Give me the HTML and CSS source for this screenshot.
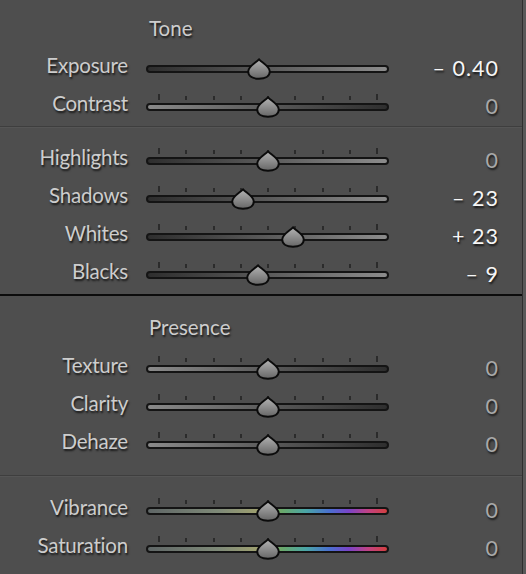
FILE: index.html
```html
<!DOCTYPE html>
<html>
<head>
<meta charset="utf-8">
<link rel="stylesheet" href="styles.css">
</head>
<body>
<div class="panel">
  <section class="group g1">
    <div class="head">Tone</div>
    <div class="row">
      <span class="label">Exposure</span>
      <div class="slider">
        <div class="track dl"></div>
        <svg class="thumb" style="left:113px" viewBox="0 0 24 22"><use href="#drop"/></svg>
      </div>
      <span class="val hi">– 0.40</span>
    </div>
    <div class="row">
      <span class="label">Contrast</span>
      <div class="slider">
        <div class="ticks"><i class="long"></i><i></i><i></i><i></i><i></i><i></i><i></i><i></i><i class="long"></i></div>
        <div class="track ld"></div>
        <svg class="thumb" style="left:122px" viewBox="0 0 24 22"><use href="#drop"/></svg>
      </div>
      <span class="val">0</span>
    </div>
  </section>
  <hr class="sep">
  <section class="group g2">
    <div class="row">
      <span class="label">Highlights</span>
      <div class="slider">
        <div class="ticks"><i class="long"></i><i></i><i></i><i></i><i></i><i></i><i></i><i></i><i class="long"></i></div>
        <div class="track dl"></div>
        <svg class="thumb" style="left:122px" viewBox="0 0 24 22"><use href="#drop"/></svg>
      </div>
      <span class="val">0</span>
    </div>
    <div class="row">
      <span class="label">Shadows</span>
      <div class="slider">
        <div class="ticks"><i class="long"></i><i></i><i></i><i></i><i></i><i></i><i></i><i></i><i class="long"></i></div>
        <div class="track dl"></div>
        <svg class="thumb" style="left:97px" viewBox="0 0 24 22"><use href="#drop"/></svg>
      </div>
      <span class="val hi">– 23</span>
    </div>
    <div class="row">
      <span class="label">Whites</span>
      <div class="slider">
        <div class="ticks"><i class="long"></i><i></i><i></i><i></i><i></i><i></i><i></i><i></i><i class="long"></i></div>
        <div class="track dl"></div>
        <svg class="thumb" style="left:147px" viewBox="0 0 24 22"><use href="#drop"/></svg>
      </div>
      <span class="val hi">+ 23</span>
    </div>
    <div class="row">
      <span class="label">Blacks</span>
      <div class="slider">
        <div class="ticks"><i class="long"></i><i></i><i></i><i></i><i></i><i></i><i></i><i></i><i class="long"></i></div>
        <div class="track dl"></div>
        <svg class="thumb" style="left:112px" viewBox="0 0 24 22"><use href="#drop"/></svg>
      </div>
      <span class="val hi">– 9</span>
    </div>
  </section>
  <hr class="sep thick">
  <section class="group g3">
    <div class="head">Presence</div>
    <div class="row">
      <span class="label">Texture</span>
      <div class="slider">
        <div class="ticks"><i class="long"></i><i></i><i></i><i></i><i></i><i></i><i></i><i></i><i class="long"></i></div>
        <div class="track ld"></div>
        <svg class="thumb" style="left:122px" viewBox="0 0 24 22"><use href="#drop"/></svg>
      </div>
      <span class="val">0</span>
    </div>
    <div class="row">
      <span class="label">Clarity</span>
      <div class="slider">
        <div class="ticks"><i class="long"></i><i></i><i></i><i></i><i></i><i></i><i></i><i></i><i class="long"></i></div>
        <div class="track ld"></div>
        <svg class="thumb" style="left:122px" viewBox="0 0 24 22"><use href="#drop"/></svg>
      </div>
      <span class="val">0</span>
    </div>
    <div class="row">
      <span class="label">Dehaze</span>
      <div class="slider">
        <div class="ticks"><i class="long"></i><i></i><i></i><i></i><i></i><i></i><i></i><i></i><i class="long"></i></div>
        <div class="track ld"></div>
        <svg class="thumb" style="left:122px" viewBox="0 0 24 22"><use href="#drop"/></svg>
      </div>
      <span class="val">0</span>
    </div>
  </section>
  <hr class="sep">
  <section class="group g4">
    <div class="row">
      <span class="label">Vibrance</span>
      <div class="slider">
        <div class="ticks"><i class="long"></i><i></i><i></i><i></i><i></i><i></i><i></i><i></i><i class="long"></i></div>
        <div class="track hue"></div>
        <svg class="thumb" style="left:122px" viewBox="0 0 24 22"><use href="#drop"/></svg>
      </div>
      <span class="val">0</span>
    </div>
    <div class="row">
      <span class="label">Saturation</span>
      <div class="slider">
        <div class="ticks"><i class="long"></i><i></i><i></i><i></i><i></i><i></i><i></i><i></i><i class="long"></i></div>
        <div class="track hue"></div>
        <svg class="thumb" style="left:122px" viewBox="0 0 24 22"><use href="#drop"/></svg>
      </div>
      <span class="val">0</span>
    </div>
  </section>
</div>
<svg class="defs" width="0" height="0">
  <defs>
    <linearGradient id="tg" x1="0" y1="0" x2="0" y2="1">
      <stop offset="0" stop-color="#b4b4b4"/>
      <stop offset="1" stop-color="#666666"/>
    </linearGradient>
    <symbol id="drop" viewBox="0 0 24 22">
      <path d="M12 1.2 C14 4.2 22.8 8 22.8 13.6 C22.8 18.3 18 20.8 12 20.8 C6 20.8 1.2 18.3 1.2 13.6 C1.2 8 10 4.2 12 1.2 Z" fill="url(#tg)" stroke="#0b0b0b" stroke-width="2" stroke-linejoin="round"/>
    </symbol>
  </defs>
</svg>
</body>
</html>
```

FILE: styles.css
```css
* { box-sizing: border-box; }
html, body { margin: 0; padding: 0; }
body {
  width: 526px;
  height: 574px;
  background: #595959;
  overflow: hidden;
  font-family: "Lato", "Open Sans", sans-serif;
}
.panel {
  width: 523px;
  height: 574px;
  background: #4e4e4e;
  border-right: 1px solid #2f2f2f;
}
.group { display: flex; flex-direction: column; }
.g1 { padding-top: 12px; }
.g2 { padding-top: 14px; }
.g3 { padding-top: 14px; padding-bottom: 11px; }
.g4 { padding-top: 15px; }
.head {
  height: 38px;
  line-height: 32px;
  padding-bottom: 6px;
  padding-left: 149px;
  font-size: 20.5px;
  color: #cdcdcd;
  text-shadow: 1px 2px 2px rgba(0,0,0,0.7);
}
.g3 .head { height: 40px; line-height: 34px; }
.row {
  display: grid;
  grid-template-columns: 128px 243px 92px;
  column-gap: 18px;
  height: 38px;
  align-items: center;
}
.label {
  text-align: right;
  font-size: 20.5px;
  letter-spacing: -0.2px;
  color: #cdcdcd;
  margin-bottom: 8px;
  text-shadow: 1px 2px 2px rgba(0,0,0,0.7);
  white-space: nowrap;
}
.val {
  text-align: right;
  font-size: 21.5px;
  color: #a8a8a8;
  letter-spacing: 1px;
  margin-bottom: 3px;
  text-shadow: 1px 2px 2px rgba(0,0,0,0.7);
  white-space: nowrap;
}
.val.hi { color: #f6f6f6; }
.slider {
  position: relative;
  height: 38px;
}
.track {
  position: absolute;
  left: 0;
  right: 0;
  top: 15px;
  height: 8px;
  border: 2px solid #141414;
  border-radius: 4px;
}
.dl { background: linear-gradient(to right, #2e2e2e, #5a5a5a 50%, #8c8c8c); }
.ld { background: linear-gradient(to right, #8a8a8a, #5a5a5a 50%, #2e2e2e); }
.hue {
  background: linear-gradient(to right, #5f6666 0%, #7f8a78 30%, #a4a46e 49%, #6aa86a 56%, #4aa6a6 66%, #4a6fd0 76%, #7a44c8 84%, #c04284 92%, #d44040 100%);
}
.ticks {
  position: absolute;
  left: 12px;
  width: 220px;
  top: 4px;
  height: 8px;
  display: flex;
  justify-content: space-between;
  align-items: flex-end;
}
.ticks i {
  display: block;
  width: 2px;
  height: 4px;
  background: #2b2b2b;
}
.ticks i.long { height: 6px; }
.thumb {
  position: absolute;
  top: 8px;
  width: 24px;
  height: 22px;
  transform: translateX(-50%);
  overflow: visible;
}
.sep {
  margin: 0;
  border: 0;
  height: 2px;
  background: #3e3e3e;
  border-bottom: 1px solid #555;
}
.sep.thick {
  background: #0c0c0c;
  border-bottom: 0;
}
.defs { position: absolute; }
```
